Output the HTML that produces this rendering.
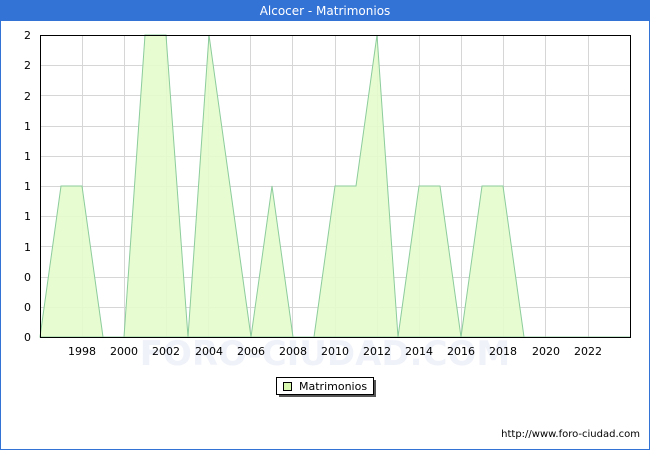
<!DOCTYPE html>
<html><head><style>
body{margin:0;width:650px;height:450px;overflow:hidden;font-family:"DejaVu Sans","Liberation Sans",sans-serif;}
</style></head><body>
<svg width="650" height="450" xmlns="http://www.w3.org/2000/svg" font-family="DejaVu Sans, Liberation Sans, sans-serif">
<rect x="0" y="0" width="650" height="450" fill="#fff"/>
<rect x="0.5" y="0.5" width="649" height="449" fill="none" stroke="#3473d6"/>
<rect x="0" y="0" width="650" height="21" fill="#3473d6"/>
<text x="325" y="15" font-size="12" fill="#fff" text-anchor="middle">Alcocer - Matrimonios</text>
<text x="325" y="365" font-size="34" fill="#f0f2fa" text-anchor="middle" font-weight="bold">FORO-CIUDAD.COM</text>
<g stroke="#d6d6d6" stroke-width="1">
<line x1="40" y1="65.5" x2="630" y2="65.5"/><line x1="40" y1="95.5" x2="630" y2="95.5"/><line x1="40" y1="126.5" x2="630" y2="126.5"/><line x1="40" y1="156.5" x2="630" y2="156.5"/><line x1="40" y1="186.5" x2="630" y2="186.5"/><line x1="40" y1="216.5" x2="630" y2="216.5"/><line x1="40" y1="246.5" x2="630" y2="246.5"/><line x1="40" y1="277.5" x2="630" y2="277.5"/><line x1="40" y1="307.5" x2="630" y2="307.5"/>
<line x1="82.5" y1="35" x2="82.5" y2="337"/><line x1="124.5" y1="35" x2="124.5" y2="337"/><line x1="166.5" y1="35" x2="166.5" y2="337"/><line x1="208.5" y1="35" x2="208.5" y2="337"/><line x1="250.5" y1="35" x2="250.5" y2="337"/><line x1="292.5" y1="35" x2="292.5" y2="337"/><line x1="335.5" y1="35" x2="335.5" y2="337"/><line x1="377.5" y1="35" x2="377.5" y2="337"/><line x1="419.5" y1="35" x2="419.5" y2="337"/><line x1="461.5" y1="35" x2="461.5" y2="337"/><line x1="503.5" y1="35" x2="503.5" y2="337"/><line x1="545.5" y1="35" x2="545.5" y2="337"/><line x1="588.5" y1="35" x2="588.5" y2="337"/>
</g>
<polygon fill="#e4fccc" fill-opacity="0.9" stroke="#8ccc9c" stroke-width="1" points="40,337 61,186 82,186 103,337 124,337 145,35 166,35 188,337 209,35 230,186 251,337 272,186 293,337 314,337 335,186 356,186 377,35 398,337 419,186 440,186 461,337 482,186 503,186 524,337 630,337"/>
<rect x="40.5" y="35.5" width="590" height="302" fill="none" stroke="#000"/>
<g font-size="11" fill="#000" text-anchor="end">
<text x="31" y="39">2</text><text x="31" y="69">2</text><text x="31" y="100">2</text><text x="31" y="130">1</text><text x="31" y="160">1</text><text x="31" y="190">1</text><text x="31" y="220">1</text><text x="31" y="251">1</text><text x="31" y="281">0</text><text x="31" y="311">0</text><text x="31" y="341">0</text>
</g>
<g font-size="11" fill="#000" text-anchor="middle">
<text x="82" y="355">1998</text><text x="124" y="355">2000</text><text x="166" y="355">2002</text><text x="209" y="355">2004</text><text x="251" y="355">2006</text><text x="293" y="355">2008</text><text x="335" y="355">2010</text><text x="377" y="355">2012</text><text x="419" y="355">2014</text><text x="461" y="355">2016</text><text x="503" y="355">2018</text><text x="546" y="355">2020</text><text x="588" y="355">2022</text>
</g>
<rect x="279" y="380" width="97" height="17" fill="#555"/>
<rect x="276.5" y="377.5" width="97" height="17" fill="#fff" stroke="#000"/>
<rect x="283.5" y="382.5" width="8" height="8" fill="#d8f8b0" stroke="#000"/>
<text x="299" y="390" font-size="11" fill="#000">Matrimonios</text>
<text x="640" y="437" font-size="10" fill="#000" text-anchor="end">http://www.foro-ciudad.com</text>
</svg>
</body></html>
